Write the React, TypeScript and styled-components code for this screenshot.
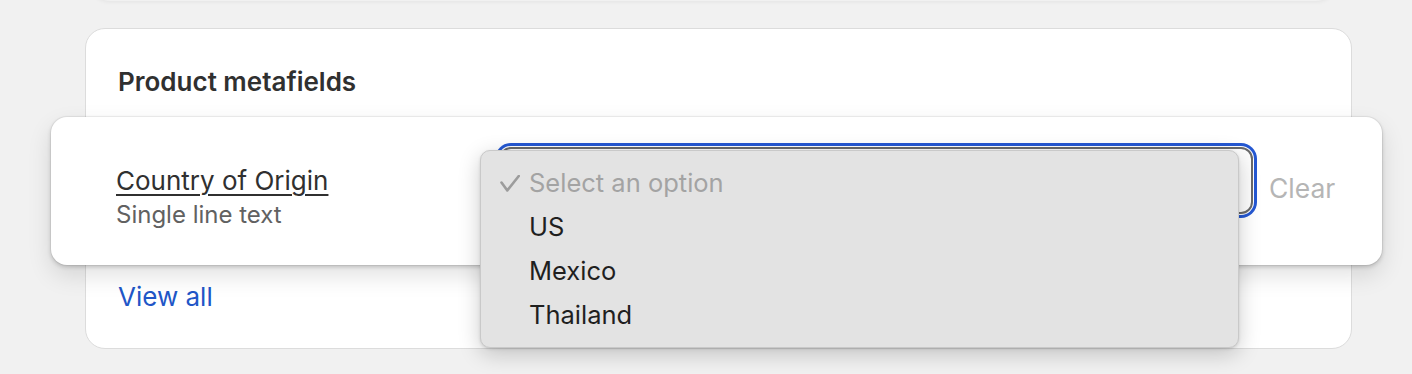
import React from 'react'
import { createGlobalStyle, styled } from 'styled-components'

const GlobalStyle = createGlobalStyle`
  html, body {
    margin: 0;
    padding: 0;
    background: #f1f1f1;
  }
  body {
    width: 1412px;
    height: 374px;
    overflow: hidden;
    font-family: Inter, "Noto Sans", "Liberation Sans", sans-serif;
    color: #303030;
    -webkit-font-smoothing: antialiased;
  }
`

const options = ['US', 'Mexico', 'Thailand']

const CheckMark = () => (
  <svg width="20" height="17" viewBox="0 0 20 17" fill="none">
    <path d="M1.5 7.5 L7.3 15.4 L18.8 1" stroke="#9c9c9c" strokeWidth="2.6" strokeLinecap="round" strokeLinejoin="round" />
  </svg>
)

const App = () => {
  return (
    <Page>
      <GlobalStyle />
      <PrevCard />
      <Card>
        <CardTitle>Product metafields</CardTitle>
        <LiftedRow>
          <FieldInfo>
            <FieldName>Country of Origin</FieldName>
            <FieldType>Single line text</FieldType>
          </FieldInfo>
          <SelectWrap>
            <SelectBox $focused />
            <OptionsMenu>
              <Option $placeholder>
                <CheckSlot><CheckMark /></CheckSlot>
                Select an option
              </Option>
              {options.map((o) => (
                <Option key={o}>
                  <CheckSlot />
                  {o}
                </Option>
              ))}
            </OptionsMenu>
          </SelectWrap>
          <ClearButton>Clear</ClearButton>
        </LiftedRow>
        <ViewAll>View all</ViewAll>
      </Card>
    </Page>
  )
}

export default App

const Page = styled.div`
  display: flex;
  flex-direction: column;
`

// bottom edge of the card above, mostly scrolled out of view
const PrevCard = styled.div`
  height: 20px;
  margin: -19px 76px 0 90px;
  border-radius: 0 0 20px 20px;
  background: #f1f1f1;
  box-shadow: 0 1px 4px rgba(0, 0, 0, 0.06);
`

const Card = styled.div`
  margin: 27px 0 0 85px;
  width: 1267px;
  box-sizing: border-box;
  background: #ffffff;
  border: 1px solid #dcdcdc;
  border-radius: 20px;
  padding: 37px 0 36px 32px;
`

const CardTitle = styled.h2`
  margin: 0;
  font-size: 26px;
  line-height: 32px;
  font-weight: 600;
  color: #303030;
`

const LiftedRow = styled.div`
  position: relative;
  display: flex;
  align-items: flex-start;
  box-sizing: border-box;
  height: 148px;
  margin: 19px -31px 0 -67px;
  padding: 30px 48px 0 65px;
  background: #ffffff;
  border-radius: 16px;
  box-shadow: 0 0 0 1px rgba(0, 0, 0, 0.05), 0 2px 4px rgba(0, 0, 0, 0.18),
    0 10px 24px rgba(0, 0, 0, 0.12);
  z-index: 1;
`

const FieldInfo = styled.div`
  flex-shrink: 0;
  width: 383px;
  margin-top: 19px;
`

const FieldName = styled.div`
  font-size: 26px;
  line-height: 30px;
  color: #303030;
  text-decoration: underline;
  text-underline-offset: 4px;
  text-decoration-thickness: 1.5px;
`

const FieldType = styled.div`
  margin-top: 5px;
  font-size: 24px;
  line-height: 28px;
  color: #616161;
`

const SelectWrap = styled.div`
  position: relative;
  flex-shrink: 0;
  width: 754px;
`

const SelectBox = styled.div<{ $focused?: boolean }>`
  box-sizing: border-box;
  height: 67px;
  border: 2px solid #6a6a6a;
  border-radius: 12px;
  background: #fdfdfd;
  box-shadow: ${(p) =>
    p.$focused ? '0 0 0 1px #ffffff, 0 0 0 4px #2558d2' : 'none'};
`

const OptionsMenu = styled.div`
  position: absolute;
  left: -19px;
  top: 3px;
  width: 759px;
  box-sizing: border-box;
  padding: 10px 0;
  background: #e3e3e3;
  border: 1px solid #c9c9c9;
  border-radius: 10px;
  box-shadow: 0 6px 22px rgba(0, 0, 0, 0.2), 0 1px 3px rgba(0, 0, 0, 0.12);
`

const Option = styled.div<{ $placeholder?: boolean }>`
  display: flex;
  align-items: center;
  height: 44px;
  padding-left: 19px;
  font-size: 25.5px;
  line-height: 44px;
  color: ${(p) => (p.$placeholder ? '#a3a3a3' : '#1f1f1f')};
`

const CheckSlot = styled.span`
  display: inline-flex;
  align-items: center;
  width: 29px;
  height: 44px;
`

const ClearButton = styled.button`
  margin: 26px 0 0 16px;
  padding: 0;
  border: none;
  background: none;
  font-family: inherit;
  font-size: 26.5px;
  line-height: 30px;
  color: #b5b5b5;
`

const ViewAll = styled.a`
  display: block;
  margin-top: 17px;
  font-size: 26px;
  line-height: 30px;
  color: #2156c7;
  text-decoration: none;
`
